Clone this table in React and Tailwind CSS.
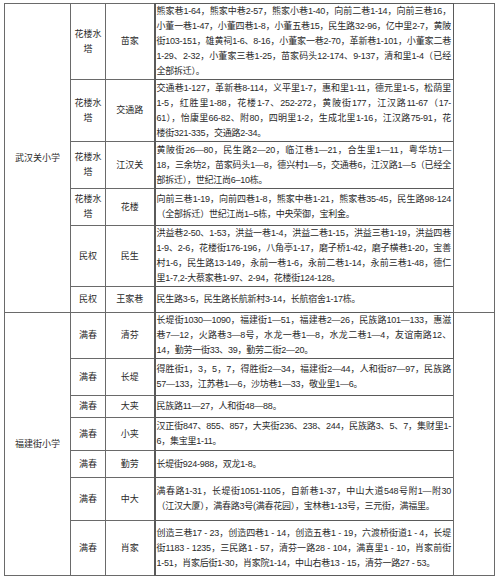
import React from "react";

const schools = [
  {
    name: "武汉关小学",
    rows: [
      {
        area: "花楼水塔",
        block: "苗家",
        h: 76,
        lines: [
          "熊家巷1-64，熊家中巷2-57，熊家小巷1-40，向前二巷1-14，向前三巷16，",
          "小董一巷1-47，小董四巷1-8，小董五巷15，民生路32-96，亿中里2-7，黄陂",
          "街103-151，雄黄祠1-6、8-16，小董家一巷2-70，革新巷1-101，小董家二巷",
          "1-29、2-32，小董家三巷1-25，苗家码头12-174、9-137，清和里1-4（已经",
          "全部拆迁）。",
        ],
      },
      {
        area: "花楼水塔",
        block: "交通路",
        h: 62,
        lines: [
          "交通巷1-127，革新巷8-114，义平里1-7，惠和里1-11，德元里1-5，松荫里",
          "1-5，红胜里1-88，花楼1-7、252-272，黄陂街177，江汉路11-67（17-",
          "61），怡康里66-82、附80，四明里1-2，生成北里1-16，江汉路75-91，花",
          "楼街321-335，交通路2-34。",
        ],
      },
      {
        area: "花楼水塔",
        block: "江汉关",
        h: 47,
        lines: [
          "黄陂街26—80，民生路2—20，临江巷1—21，合生里1—11，粤华坊1—",
          "18，三余坊2，苗家码头1—8，德兴村1—5，交通巷6，江汉路1—5（已经全",
          "部拆迁），世纪江尚6–10栋。",
        ],
      },
      {
        area: "花楼水塔",
        block: "花楼",
        h: 37,
        lines: [
          "向前三巷1-19，向前四巷1-8，熊家中巷1-21，熊家巷35-45，民生路98-124",
          "（全部拆迁）世纪江尚1–5栋，中央荣御，宝利金。",
        ],
      },
      {
        area: "民权",
        block: "民生",
        h: 61,
        lines: [
          "洪益巷2-50、1-53，洪益一巷1-4，洪益二巷1-15，洪益三巷1-19，洪益四巷",
          "1-9、2-6，花楼街176-196，八角亭1-17，磨子桥1-42，磨子横巷1-20，宝善",
          "村1-6，民生路13-149，永前一巷1-6，永前二巷1-14，永前三巷1-48，德仁",
          "里1-7,2-大蔡家巷1-97、2-94，花楼街124-128。",
        ],
      },
      {
        area: "民权",
        block: "王家巷",
        h: 26,
        lines: ["民生路3-5，民生路长航新村3-14，长航宿舍1-17栋。"],
      },
    ],
  },
  {
    name: "福建街小学",
    rows: [
      {
        area: "满春",
        block: "清芬",
        h: 46,
        lines: [
          "长堤街1030—1090，福建街1—51，福建巷2—26，民族路101—133，惠滋",
          "巷7—12，火路巷3—8号，水龙一巷1—8，水龙二巷1—4，友谊南路12、",
          "14，勤劳一街33、39，勤劳二街2—20。",
        ],
      },
      {
        area: "满春",
        block: "长堤",
        h: 37,
        lines: [
          "得胜街1，3，5，7，得胜街2—34，福建街2—44，人和街87—97，民族路",
          "57—133，江苏巷1—6，沙坊巷1—33，敬业里1—6。",
        ],
      },
      {
        area: "满春",
        block: "大夹",
        h: 22,
        lines: ["民族路11—27，人和街48—88。"],
      },
      {
        area: "满春",
        block: "小夹",
        h: 33,
        lines: [
          "汉正街847、855、857，大夹街236、238、244，民族路3、5、7，集财里1-",
          "6，集宝里1-11。",
        ],
      },
      {
        area: "满春",
        block: "勤劳",
        h: 27,
        lines: ["长堤街924-988，双龙1-8。"],
      },
      {
        area: "满春",
        block: "中大",
        h: 43,
        lines: [
          "满春路1-31，长堤街1051-1105，自新巷1-37，中山大道548号附1—附30",
          "（江汉大厦），满春路3号(满春花园），宝林巷1-13号，三元街，满福里。",
        ],
      },
      {
        area: "满春",
        block: "肖家",
        h: 55,
        lines: [
          "创造三巷17 - 23，创造四巷1 - 14，创造五巷1 - 19，六渡桥街道1 - 4，长堤",
          "街1183 - 1235，三民路1 - 57，清芬一路28 - 104，满喜里1 - 10，肖家前街",
          "1-51，肖家后街1-30，肖家院1-14，中山右巷13 - 15，清芬一路27 - 53。",
        ],
      },
    ],
  },
];

const cell = "border border-[#6a6a6a] text-center align-middle";

export default function App() {
  return (
    <div className="w-[500px] h-[581px] bg-white pt-[3px] pl-[4px] text-[#2a2a2a] text-[9px] leading-[15px] font-['Liberation_Sans','Noto_Sans_CJK_SC',sans-serif]">
      {/* street table */}
      <table className="table-fixed border-collapse w-[490px]">
        <colgroup>
          <col className="w-[66px]" />
          <col className="w-[35px]" />
          <col className="w-[49px]" />
          <col className="w-[299px]" />
          <col className="w-[41px]" />
        </colgroup>
        <tbody>
          {schools.map((s) =>
            s.rows.map((r, i) => (
              <tr key={s.name + r.block} style={{ height: r.h }}>
                {i === 0 && (
                  <td rowSpan={s.rows.length} className={cell}>
                    {s.name}
                  </td>
                )}
                <td className={`${cell} px-[3px]`}>{r.area}</td>
                <td className={cell}>{r.block}</td>
                <td className="border border-l-2 border-[#5a5a5a] align-middle pl-[1px] pr-[2px] overflow-hidden tracking-[-0.25px]">
                  {r.lines.map((line, j) => (
                    <div
                      key={j}
                      className={
                        j < r.lines.length - 1
                          ? "whitespace-nowrap text-justify [text-align-last:justify]"
                          : "whitespace-nowrap"
                      }
                    >
                      {line}
                    </div>
                  ))}
                </td>
                {i === 0 && (
                  <td rowSpan={s.rows.length} className={cell}></td>
                )}
              </tr>
            ))
          )}
        </tbody>
      </table>
    </div>
  );
}
